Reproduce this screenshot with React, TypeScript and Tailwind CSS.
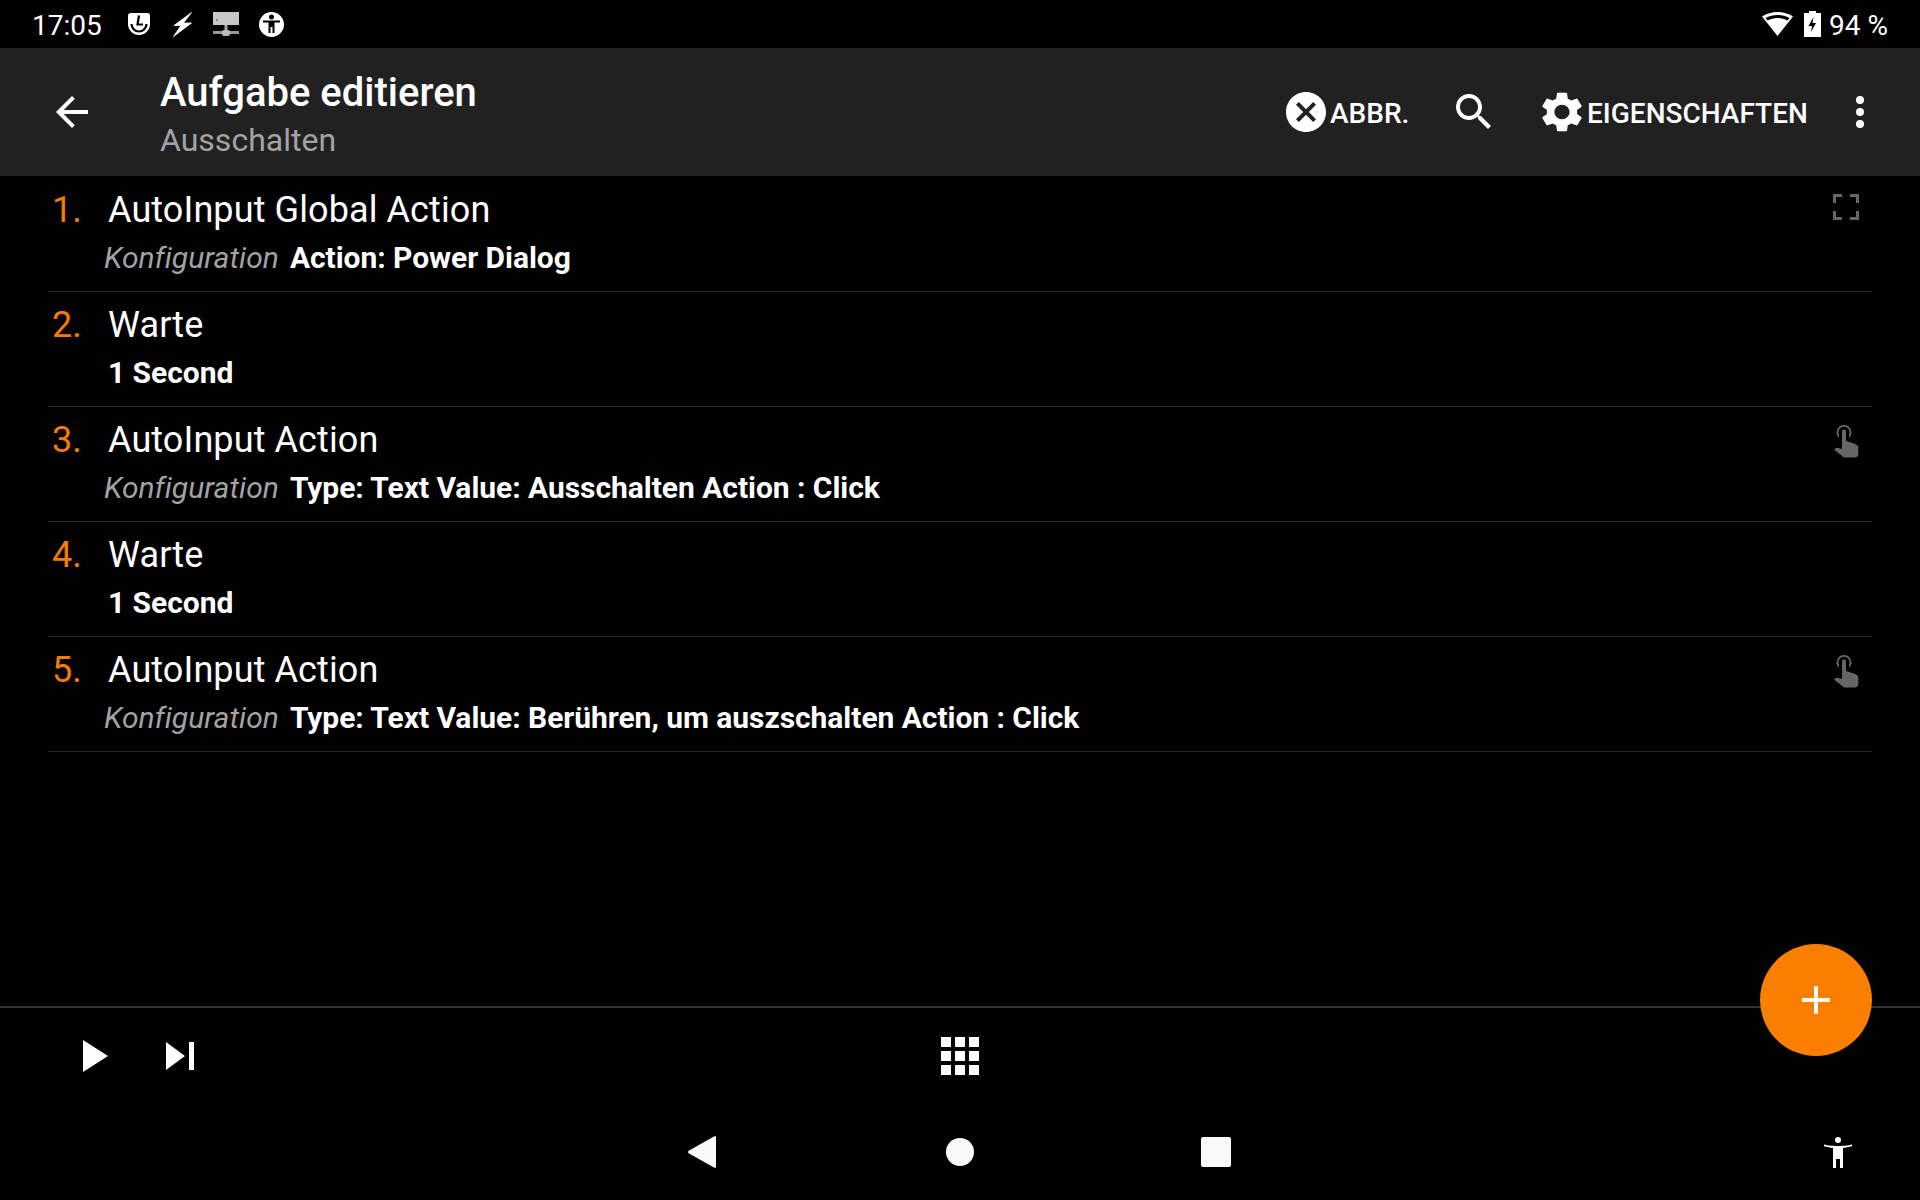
import React from 'react';

const ROWS = [
  { n: '1.', title: 'AutoInput Global Action', config: true, detail: 'Action: Power Dialog', icon: 'expand' },
  { n: '2.', title: 'Warte', config: false, detail: '1 Second', icon: '' },
  { n: '3.', title: 'AutoInput Action', config: true, detail: 'Type: Text Value: Ausschalten Action : Click', icon: 'touch' },
  { n: '4.', title: 'Warte', config: false, detail: '1 Second', icon: '' },
  { n: '5.', title: 'AutoInput Action', config: true, detail: 'Type: Text Value: Berühren, um auszschalten Action : Click', icon: 'touch' },
];

const ExpandIcon = () => (
  <svg width="26" height="26" viewBox="0 0 26 26" fill="none" stroke="#666" strokeWidth="3">
    <path d="M1.500 9V1.500H9M17 1.500h7.500V9M24.500 17v7.500H17M9 24.500H1.500V17" />
  </svg>
);

const TouchIcon = () => (
  <svg width="26" height="34" viewBox="0 0 26 34" fill="#666">
    <path d="M11 1a7.400 7.400 0 0 0-5 12.800v-2.600A5.600 5.600 0 0 1 11 2.800a5.600 5.600 0 0 1 5 8.400v2.600A7.400 7.400 0 0 0 11 1z" />
    <path d="M9 7.600a2 2 0 0 1 4 0V17l8 2.600c2.400.800 4 2 4.300 3.800V30a3.600 3.600 0 0 1-3.600 3.400H11L1 25.600l1.200-1.200c.800-.800 2-1 3-.500L9 25z" />
  </svg>
);

const AccessBody = () => (
  <svg width="28" height="31" viewBox="0 0 28 31" fill="#fff">
    <circle cx="14" cy="3" r="3" />
    <path d="M0 7.600c4 1 7 1.400 14 1.400s10-.400 14-1.400l.400 1.600c-3.400 1-6.400 1.500-9.400 1.800V31h-3v-9h-4v9H9V11C6 10.700 3 10.200-.400 9.200z" />
  </svg>
);

export default function App() {
  return (
    <div className="relative flex h-[1200px] w-[1920px] flex-col overflow-hidden bg-black text-white font-['Roboto',sans-serif]">
      {/* status bar */}
      <div className="flex h-12 shrink-0 items-center">
        <span className="ml-[32px] w-[70px] pt-[3px] text-[28px] leading-none">17:05</span>
        <svg className="ml-[26px]" width="22" height="23" viewBox="0 0 22 23">
          <path d="M3 0h16a3 3 0 0 1 3 3v8a11 11 0 0 1-22 0V3a3 3 0 0 1 3-3z" fill="#fff" />
          <path d="M3.500 11a7.500 7.500 0 0 0 15 0" fill="none" stroke="#000" strokeWidth="2.200" />
          <path d="M11 2.500 9.500 11.500H15" fill="none" stroke="#000" strokeWidth="2.200" />
        </svg>
        <svg className="ml-[23px]" width="19" height="25" viewBox="0 0 19 25" fill="#fff" stroke="#fff" strokeWidth="0.8">
          <path d="M18.500 .500 1 13.500h7L.500 24.500 18.500 11h-8z" />
        </svg>
        <svg className="ml-[21px]" width="26" height="25" viewBox="0 0 26 25">
          <rect width="26" height="13" fill="#c8c8c8" />
          <rect x="3" y="7" width="2" height="2" fill="#888" />
          <rect x="11.500" y="13" width="3" height="6" fill="#aaa" />
          <rect y="19" width="26" height="3" fill="#999" />
          <rect x="9" y="18" width="8" height="6" rx="2" fill="#bbb" />
        </svg>
        <svg className="ml-[20px]" width="25" height="25" viewBox="0 0 25 25">
          <circle cx="12.500" cy="12.500" r="12.500" fill="#fff" />
          <circle cx="12.500" cy="5" r="2.500" fill="#000" />
          <path d="M4 8.500h17v2h-5.500V21h-2v-6h-2v6h-2V10.500H4z" fill="#000" />
        </svg>
        <div className="ml-auto flex items-center">
          <svg width="31" height="24" viewBox="0 0 31 24" fill="#fff">
            <path fillRule="evenodd" d="M15.500 0C10 0 4.500 1.500 0 4.500L15.500 24 31 4.500C26.500 1.500 21 0 15.500 0zm0 3c4.500 0 8.500 1 12 3l-2 2.500C22.500 7 19 6 15.500 6S8.500 7 5.500 8.500l-2-2.500c3.500-2 7.500-3 12-3z" />
          </svg>
          <svg className="ml-[11px]" width="17" height="26" viewBox="0 0 17 26">
            <path d="M5 0h7v2h5v24H0V2h5z" fill="#fff" />
            <path d="M9.500 6 4.500 15H8l-1 6 5-9H8.500z" fill="#000" />
          </svg>
          <span className="ml-[8px] mr-[33px] w-[58px] whitespace-nowrap pt-[3px] text-[28px] leading-none">94 %</span>
        </div>
      </div>

      {/* action bar */}
      <div className="flex h-32 shrink-0 items-center bg-[#212121]">
        <svg className="ml-[48px]" width="48" height="48" viewBox="0 0 24 24" fill="#fff">
          <path d="M20 11H7.830l5.590-5.590L12 4l-8 8 8 8 1.410-1.410L7.830 13H20v-2z" />
        </svg>
        <div className="ml-[64px] flex flex-col pt-[6px]">
          <span className="text-[40px] leading-[49px] font-medium">Aufgabe editieren</span>
          <span className="text-[32px] leading-[46px] text-[#a3a3a3]">Ausschalten</span>
        </div>
        <div className="ml-auto flex items-center">
          <svg width="48" height="48" viewBox="0 0 24 24" fill="#fff">
            <path d="M12 2C6.470 2 2 6.470 2 12s4.470 10 10 10 10-4.470 10-10S17.530 2 12 2zm5 13.590L15.590 17 12 13.410 8.410 17 7 15.590 10.590 12 7 8.410 8.410 7 12 10.590 15.590 7 17 8.410 13.410 12 17 15.590z" />
          </svg>
          <span className="w-[79px] whitespace-nowrap pt-[3px] text-[28px] font-medium leading-none">ABBR.</span>
          <svg className="ml-[41px]" width="48" height="48" viewBox="0 0 24 24" fill="#fff">
            <path d="M15.500 14h-.790l-.280-.270C15.410 12.590 16 11.110 16 9.500 16 5.910 13.090 3 9.500 3S3 5.910 3 9.500 5.910 16 9.500 16c1.610 0 3.090-.590 4.230-1.570l.270.280v.790l5 4.990L20.490 19l-4.990-5zm-6 0C7.010 14 5 11.990 5 9.500S7.010 5 9.500 5 14 7.010 14 9.500 11.990 14 9.500 14z" />
          </svg>
          <svg className="ml-[44px]" width="40" height="40" viewBox="2.500 2 19 20" preserveAspectRatio="none" fill="#fff">
            <path d="M19.140 12.940c.040-.300.060-.610.060-.940 0-.320-.020-.640-.070-.940l2.030-1.580c.180-.140.230-.410.120-.610l-1.920-3.320c-.120-.220-.370-.290-.590-.220l-2.390.960c-.500-.380-1.030-.700-1.620-.940l-.360-2.540c-.040-.240-.240-.410-.480-.410h-3.840c-.240 0-.430.170-.470.410l-.360 2.540c-.590.240-1.130.570-1.620.940l-2.390-.960c-.220-.080-.470 0-.590.220L2.740 8.870c-.120.210-.080.470.120.610l2.030 1.580c-.050.300-.090.630-.090.940s.020.640.070.940l-2.030 1.580c-.180.140-.230.410-.120.610l1.920 3.320c.120.220.370.290.590.220l2.390-.960c.500.380 1.030.700 1.620.940l.360 2.540c.050.240.240.410.480.410h3.840c.240 0 .440-.170.470-.410l.360-2.540c.590-.240 1.130-.560 1.620-.940l2.390.960c.220.080.470 0 .590-.220l1.920-3.320c.120-.220.070-.470-.120-.610l-2.010-1.580zM12 15.600c-1.980 0-3.600-1.620-3.600-3.600s1.620-3.600 3.600-3.600 3.600 1.620 3.600 3.600-1.620 3.600-3.600 3.600z" />
          </svg>
          <span className="ml-[5px] w-[222px] whitespace-nowrap pt-[3px] text-[28px] font-medium leading-none">EIGENSCHAFTEN</span>
          <div className="ml-[47px] mr-[56px] flex w-[8px] flex-col gap-[4px]">
            <div className="h-[8px] rounded-full bg-white" />
            <div className="h-[8px] rounded-full bg-white" />
            <div className="h-[8px] rounded-full bg-white" />
          </div>
        </div>
      </div>

      {/* task list */}
      <div className="flex flex-1 flex-col px-[48px]">
        {ROWS.map((r) => (
          <div key={r.n} className="flex h-[115px] shrink-0 justify-between border-b border-[#2a2a2a] first:h-[116px] first:pt-[1px]">
            <div className="flex flex-col">
              <div className="flex h-[59px] items-end">
                <span className="ml-[4px] w-[56px] text-[36px] leading-[52px] text-[#f57c00]">{r.n}</span>
                <span className="text-[36px] leading-[52px] tracking-[0.1px]">{r.title}</span>
              </div>
              <div className={`mt-[4px] flex h-[36px] items-center ${r.config ? 'ml-[56px]' : 'ml-[60px]'}`}>
                {r.config && <span className="mr-[11px] text-[30px] italic leading-none tracking-[0.03px] text-[#a3a3a3]">Konfiguration</span>}
                <span className="text-[30px] font-bold leading-none tracking-[-0.04px]">{r.detail}</span>
              </div>
            </div>
            <div className="mr-[13px] pt-[17px]">
              {r.icon === 'expand' && <ExpandIcon />}
              {r.icon === 'touch' && <TouchIcon />}
            </div>
          </div>
        ))}
      </div>

      {/* bottom toolbar */}
      <div className="relative flex h-[98px] shrink-0 items-center border-t-2 border-[#333]">
        <svg className="ml-[83px]" width="25" height="32" viewBox="0 0 25 32" fill="#fff">
          <path d="M0 0l25 16L0 32z" />
        </svg>
        <svg className="ml-[58px]" width="28" height="28" viewBox="0 0 28 28" fill="#fff">
          <path d="M0 0l19 14L0 28zM23 0h5v28h-5z" />
        </svg>
        <svg className="ml-[747px]" width="38" height="38" viewBox="0 0 38 38" fill="#fff">
          <path d="M0 0h10v10H0zM14 0h10v10H14zM28 0h10v10H28zM0 14h10v10H0zM14 14h10v10H14zM28 14h10v10H28zM0 28h10v10H0zM14 28h10v10H14zM28 28h10v10H28z" />
        </svg>
      </div>

      {/* nav bar */}
      <div className="flex h-24 shrink-0 items-center">
        <svg className="ml-[688px]" width="28" height="32" viewBox="0 0 28 32" fill="#fafafa">
          <path d="M26 .500c1.200-.800 2-.200 2 1v29c0 1.200-.800 1.800-2 1L1 17.500c-1.300-.800-1.300-2.200 0-3z" />
        </svg>
        <div className="ml-[230px] h-[28px] w-[28px] rounded-full bg-[#fafafa]" />
        <div className="ml-[227px] h-[30px] w-[30px] rounded-[2px] bg-[#fafafa]" />
        <div className="ml-[593px]"><AccessBody /></div>
      </div>

      {/* add button */}
      <div className="absolute left-[1760px] top-[944px] flex h-[112px] w-[112px] items-center justify-center rounded-full bg-[#f97f00]">
        <svg width="28" height="28" viewBox="0 0 28 28" fill="#fff">
          <path d="M12 0h4v12h12v4H16v12h-4V16H0v-4h12z" />
        </svg>
      </div>
    </div>
  );
}
